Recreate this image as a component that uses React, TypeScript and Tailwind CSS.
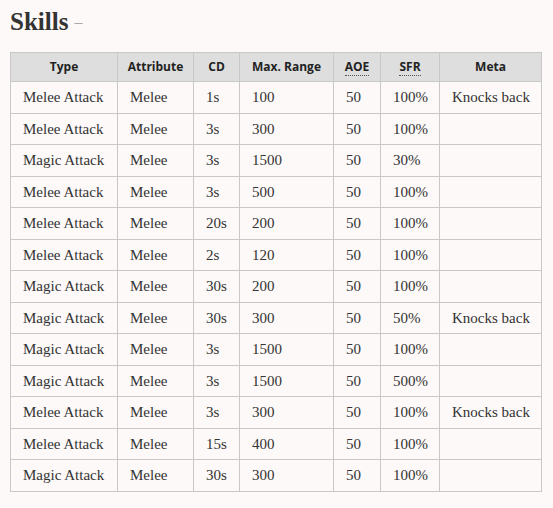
import React from "react";

const rows: string[][] = [
  ["Melee Attack", "Melee", "1s", "100", "50", "100%", "Knocks back"],
  ["Melee Attack", "Melee", "3s", "300", "50", "100%", ""],
  ["Magic Attack", "Melee", "3s", "1500", "50", "30%", ""],
  ["Melee Attack", "Melee", "3s", "500", "50", "100%", ""],
  ["Melee Attack", "Melee", "20s", "200", "50", "100%", ""],
  ["Melee Attack", "Melee", "2s", "120", "50", "100%", ""],
  ["Magic Attack", "Melee", "30s", "200", "50", "100%", ""],
  ["Magic Attack", "Melee", "30s", "300", "50", "50%", "Knocks back"],
  ["Magic Attack", "Melee", "3s", "1500", "50", "100%", ""],
  ["Magic Attack", "Melee", "3s", "1500", "50", "500%", ""],
  ["Melee Attack", "Melee", "3s", "300", "50", "100%", "Knocks back"],
  ["Melee Attack", "Melee", "15s", "400", "50", "100%", ""],
  ["Magic Attack", "Melee", "30s", "300", "50", "100%", ""],
];

const widths = ["w-[107px]", "w-[76px]", "w-[46px]", "w-[94px]", "w-[47px]", "w-[59px]", "w-[102px]"];

export default function App() {
  return (
    <div className="min-h-[508px] w-[553px] bg-[#fdf9f8] px-[10px] pt-[6px] text-[#222]">
      <h2 className="flex items-baseline font-['Liberation_Serif',serif] text-[25px] font-bold leading-[32px] text-[#333]">
        Skills
        <span className="relative top-[-3px] ml-[6px] text-[16px] font-normal text-[#aaa]">–</span>
      </h2>
      <table className="mt-[11px] w-[531px] table-fixed border-collapse">
        <colgroup>
          {widths.map((w, i) => (
            <col key={i} className={w} />
          ))}
        </colgroup>
        <thead>
          <tr className="h-[29px] bg-[#dedede]">
            {["Type", "Attribute", "CD", "Max. Range", "AOE", "SFR", "Meta"].map((h) => (
              <th
                key={h}
                className="border border-[#c8c8c8] p-0 text-center font-['Open_Sans',sans-serif] text-[12px] font-bold text-[#222]"
              >
                {h === "AOE" || h === "SFR" ? (
                  <abbr className="border-b border-dotted border-[#555] no-underline">{h}</abbr>
                ) : (
                  h
                )}
              </th>
            ))}
          </tr>
        </thead>
        <tbody>
          {rows.map((r, i) => (
            <tr key={i} className="h-[31.5px] bg-[#fcf9f8]">
              {r.map((c, j) => (
                <td
                  key={j}
                  className="border border-[#c8c8c8] py-0 pl-[12px] pr-[2px] text-left font-['Liberation_Serif',serif] text-[15px] text-[#333]"
                >
                  {c}
                </td>
              ))}
            </tr>
          ))}
        </tbody>
      </table>
    </div>
  );
}
